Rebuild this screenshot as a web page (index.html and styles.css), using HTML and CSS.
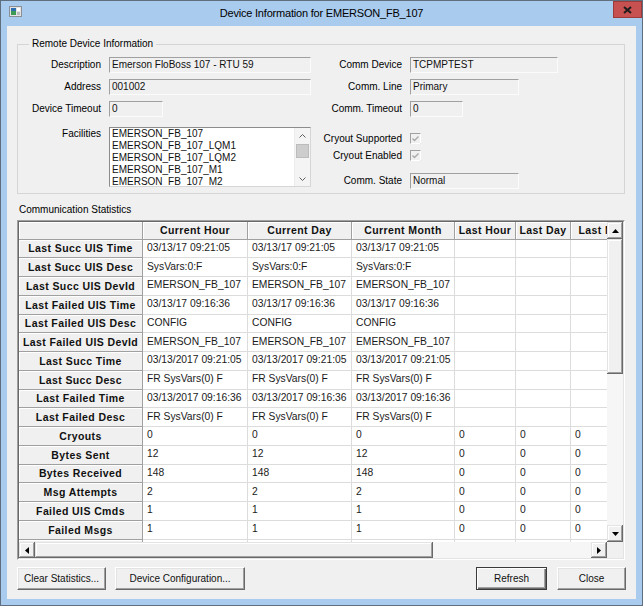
FILE: index.html
```html
<!DOCTYPE html>
<html lang="en">
<head>
<meta charset="utf-8">
<title>Device Information for EMERSON_FB_107</title>
<link rel="stylesheet" href="styles.css">
</head>
<body>
<div class="window">
  <div class="titlebar">
    <div class="tb-left">
      <svg class="app-icon" viewBox="0 0 13 11" width="13" height="11">
        <rect x="0.5" y="0.5" width="12" height="10" fill="#e4e4e4" stroke="#8a8f96"/>
        <rect x="2" y="2" width="5" height="7" fill="#2f6fb0"/>
        <rect x="2" y="5" width="5" height="4" fill="#3c9a55"/>
        <rect x="8" y="2" width="3" height="3" fill="#ffffff"/>
        <rect x="8" y="6" width="3" height="3" fill="#b8bcc2"/>
      </svg>
    </div>
    <div class="title">Device Information for EMERSON_FB_107</div>
    <div class="tb-right">
      <div class="close-btn">
        <svg viewBox="0 0 9 8" width="9" height="8"><path d="M1 1 L8 7 M8 1 L1 7" stroke="#1c1c1c" stroke-width="2" fill="none"/></svg>
      </div>
    </div>
  </div>

  <div class="client">
    <fieldset class="group">
      <legend>Remote Device Information</legend>
      <div class="group-body">
        <div class="form form-left">
          <div class="lbl">Description</div><div class="field w202">Emerson FloBoss 107 - RTU 59</div>
          <div class="lbl">Address</div><div class="field w202">001002</div>
          <div class="lbl">Device Timeout</div><div class="field w54">0</div>
          <div class="lbl lbl-top">Facilities</div>
          <div class="listbox">
            <div class="list-items">
              <div>EMERSON_FB_107</div>
              <div>EMERSON_FB_107_LQM1</div>
              <div>EMERSON_FB_107_LQM2</div>
              <div>EMERSON_FB_107_M1</div>
              <div>EMERSON_FB_107_M2</div>
            </div>
            <div class="lb-scroll">
              <div class="lb-btn"><svg viewBox="0 0 7 4" width="7" height="4"><path d="M0.5 3.5 L3.5 0.5 L6.5 3.5" stroke="#606060" fill="none"/></svg></div>
              <div class="lb-track"><div class="lb-thumb"></div></div>
              <div class="lb-btn"><svg viewBox="0 0 7 4" width="7" height="4"><path d="M0.5 0.5 L3.5 3.5 L6.5 0.5" stroke="#606060" fill="none"/></svg></div>
            </div>
          </div>
        </div>
        <div class="form form-right">
          <div class="lbl">Comm Device</div><div class="field w148">TCPMPTEST</div>
          <div class="lbl">Comm. Line</div><div class="field w109">Primary</div>
          <div class="lbl">Comm. Timeout</div><div class="field w53">0</div>
          <div class="lbl lbl-chk">Cryout Supported</div>
          <div class="chk-cell"><svg class="chk" viewBox="0 0 11 11" width="11" height="11"><rect x="0.5" y="0.5" width="10" height="10" fill="#f0f0f0" stroke="#a0a0a0"/><path d="M10.5 0.5 V10.5 H0.5" stroke="#ffffff" fill="none"/><path d="M2.5 5.5 L4.5 7.5 L8.5 3.5" stroke="#a8a8a8" stroke-width="1.4" fill="none"/></svg></div>
          <div class="lbl lbl-chk">Cryout Enabled</div>
          <div class="chk-cell"><svg class="chk" viewBox="0 0 11 11" width="11" height="11"><rect x="0.5" y="0.5" width="10" height="10" fill="#f0f0f0" stroke="#a0a0a0"/><path d="M10.5 0.5 V10.5 H0.5" stroke="#ffffff" fill="none"/><path d="M2.5 5.5 L4.5 7.5 L8.5 3.5" stroke="#a8a8a8" stroke-width="1.4" fill="none"/></svg></div>
          <div class="lbl">Comm. State</div><div class="field w109">Normal</div>
        </div>
      </div>
    </fieldset>

    <div class="section-label">Communication Statistics</div>

    <div class="grid-frame">
      <div class="grid-inner">
        <div class="grid-main">
          <div class="viewport">
            <table class="stats">
              <colgroup>
                <col class="c-rh"><col class="c-ch"><col class="c-cd"><col class="c-cm"><col class="c-lh"><col class="c-ld"><col class="c-lm">
              </colgroup>
              <tr class="hdr"><th class="corner"></th><th>Current Hour</th><th>Current Day</th><th>Current Month</th><th>Last Hour</th><th>Last Day</th><th class="clip">Last Month</th></tr>
              <tr><th>Last Succ UIS Time</th><td>03/13/17 09:21:05</td><td>03/13/17 09:21:05</td><td>03/13/17 09:21:05</td><td></td><td></td><td></td></tr>
              <tr><th>Last Succ UIS Desc</th><td>SysVars:0:F</td><td>SysVars:0:F</td><td>SysVars:0:F</td><td></td><td></td><td></td></tr>
              <tr><th>Last Succ UIS DevId</th><td>EMERSON_FB_107</td><td>EMERSON_FB_107</td><td>EMERSON_FB_107</td><td></td><td></td><td></td></tr>
              <tr><th>Last Failed UIS Time</th><td>03/13/17 09:16:36</td><td>03/13/17 09:16:36</td><td>03/13/17 09:16:36</td><td></td><td></td><td></td></tr>
              <tr><th>Last Failed UIS Desc</th><td>CONFIG</td><td>CONFIG</td><td>CONFIG</td><td></td><td></td><td></td></tr>
              <tr><th>Last Failed UIS DevId</th><td>EMERSON_FB_107</td><td>EMERSON_FB_107</td><td>EMERSON_FB_107</td><td></td><td></td><td></td></tr>
              <tr><th>Last Succ Time</th><td>03/13/2017 09:21:05</td><td>03/13/2017 09:21:05</td><td>03/13/2017 09:21:05</td><td></td><td></td><td></td></tr>
              <tr><th>Last Succ Desc</th><td>FR SysVars(0) F</td><td>FR SysVars(0) F</td><td>FR SysVars(0) F</td><td></td><td></td><td></td></tr>
              <tr><th>Last Failed Time</th><td>03/13/2017 09:16:36</td><td>03/13/2017 09:16:36</td><td>03/13/2017 09:16:36</td><td></td><td></td><td></td></tr>
              <tr><th>Last Failed Desc</th><td>FR SysVars(0) F</td><td>FR SysVars(0) F</td><td>FR SysVars(0) F</td><td></td><td></td><td></td></tr>
              <tr><th>Cryouts</th><td>0</td><td>0</td><td>0</td><td>0</td><td>0</td><td>0</td></tr>
              <tr><th>Bytes Sent</th><td>12</td><td>12</td><td>12</td><td>0</td><td>0</td><td>0</td></tr>
              <tr><th>Bytes Received</th><td>148</td><td>148</td><td>148</td><td>0</td><td>0</td><td>0</td></tr>
              <tr><th>Msg Attempts</th><td>2</td><td>2</td><td>2</td><td>0</td><td>0</td><td>0</td></tr>
              <tr><th>Failed UIS Cmds</th><td>1</td><td>1</td><td>1</td><td>0</td><td>0</td><td>0</td></tr>
              <tr><th>Failed Msgs</th><td>1</td><td>1</td><td>1</td><td>0</td><td>0</td><td>0</td></tr>
              <tr><th></th><td></td><td></td><td></td><td></td><td></td><td></td></tr>
            </table>
          </div>
          <div class="vscroll">
            <div class="sb-btn vbtn"><svg viewBox="0 0 7 4" width="7" height="4"><path d="M3.5 0 L7 4 L0 4 Z" fill="#000"/></svg></div>
            <div class="sb-thumb vthumb"></div>
            <div class="sb-track"></div>
            <div class="sb-btn vbtn"><svg viewBox="0 0 7 4" width="7" height="4"><path d="M0 0 L7 0 L3.5 4 Z" fill="#000"/></svg></div>
          </div>
        </div>
        <div class="hscroll-row">
          <div class="hscroll">
            <div class="sb-btn hbtn"><svg viewBox="0 0 4 7" width="4" height="7"><path d="M0 3.5 L4 0 L4 7 Z" fill="#000"/></svg></div>
            <div class="sb-thumb hthumb"></div>
            <div class="sb-track"></div>
            <div class="sb-btn hbtn"><svg viewBox="0 0 4 7" width="4" height="7"><path d="M0 0 L4 3.5 L0 7 Z" fill="#000"/></svg></div>
          </div>
          <div class="sb-corner"></div>
        </div>
      </div>
    </div>

    <div class="buttons">
      <div class="btn b-clear">Clear Statistics...</div>
      <div class="btn b-config">Device Configuration...</div>
      <div class="spacer"></div>
      <div class="btn btn-default b-refresh">Refresh</div>
      <div class="btn b-close">Close</div>
    </div>
  </div>
</div>
</body>
</html>
```
FILE: styles.css
```css
* { box-sizing: border-box; }
html, body { margin: 0; padding: 0; }
body {
  width: 643px;
  height: 606px;
  overflow: hidden;
  font-family: "Liberation Sans", Arial, sans-serif;
  font-size: 10px;
  color: #000;
  background: #a9cbee;
}
.window {
  width: 643px;
  height: 606px;
  background: #a9cbee;
  border: 1px solid #5f6f80;
  display: flex;
  flex-direction: column;
}
.titlebar {
  flex: none;
  height: 25px;
  display: grid;
  grid-template-columns: 1fr auto 1fr;
  align-items: start;
}
.tb-left { padding: 5px 0 0 8px; }
.app-icon { display: block; }
.title {
  font-size: 11px;
  letter-spacing: -0.2px;
  line-height: 25px;
  color: #000;
  white-space: nowrap;
}
.tb-right { display: flex; justify-content: flex-end; }
.close-btn {
  width: 29px;
  height: 17px;
  background: #c75050;
  border: 1px solid #9d3a3a;
  display: flex;
  align-items: center;
  justify-content: center;
}
.close-btn svg { display: block; }

.client {
  flex: 1;
  margin: 0 6px 6px 6px;
  background: #f0f0f0;
  display: flex;
  flex-direction: column;
  padding: 0 11px 0 10px;
}

/* group box */
.group {
  margin: 12px 0 0 0;
  padding: 7px 0 4px 0;
  border: 1px solid #d5d5d5;
  min-width: 0;
}
.group legend {
  margin-left: 11px;
  padding: 0 3px;
  line-height: 12px;
  font-size: 10px;
}
.group-body { display: flex; align-items: flex-start; }
.form { display: grid; column-gap: 8px; align-items: start; }
.form-left {
  grid-template-columns: 83px 202px;
  grid-template-rows: 22px 22px 26px 60px;
}
.form-right {
  grid-template-columns: 91px auto;
  grid-template-rows: 22px 22px 30px 17px 25px 16px;
}
.lbl {
  text-align: right;
  line-height: 16px;
  white-space: nowrap;
}
.lbl-top { line-height: 12px; padding-top: 1px; }
.lbl-chk { line-height: 15px; }
.field {
  height: 16px;
  border-style: solid;
  border-width: 1px;
  border-color: #a0a0a0 #fbfbfb #fbfbfb #a0a0a0;
  padding-left: 2px;
  line-height: 14px;
  white-space: nowrap;
  overflow: hidden;
  color: #111;
}
.w202 { width: 202px; }
.w54 { width: 54px; }
.w148 { width: 148px; }
.w109 { width: 109px; }
.w53 { width: 53px; }
.chk-cell { height: 15px; display: flex; align-items: center; }
.chk { display: block; }

/* listbox */
.listbox {
  width: 202px;
  height: 60px;
  border-style: solid;
  border-width: 1px;
  border-color: #8c8c8c #d6d6d6 #d6d6d6 #8c8c8c;
  background: #fff;
  display: flex;
  overflow: hidden;
}
.list-items {
  flex: 1;
  padding: 0 0 0 2px;
  line-height: 12px;
  overflow: hidden;
  white-space: nowrap;
  color: #111;
}
.lb-scroll {
  width: 16px;
  display: flex;
  flex-direction: column;
  background: #f4f4f4;
  border-left: 1px solid #ececec;
}
.lb-btn {
  height: 15px;
  display: flex;
  align-items: center;
  justify-content: center;
  flex: none;
}
.lb-btn svg { display: block; }
.lb-track { flex: 1; padding: 1px 1px 0 1px; }
.lb-thumb {
  height: 14px;
  background: #cdcdcd;
  border: 1px solid #bcbcbc;
}

/* stats */
.section-label {
  margin: 10px 0 4px 2px;
  line-height: 12px;
}
.grid-frame {
  border-style: solid;
  border-width: 1px;
  border-color: #a0a0a0 #ffffff #ffffff #a0a0a0;
}
.grid-inner {
  border-style: solid;
  border-width: 1px;
  border-color: #696969 #e3e3e3 #e3e3e3 #696969;
  display: flex;
  flex-direction: column;
}
.grid-main { display: flex; height: 320px; }
.viewport { flex: 1; overflow: hidden; background: #f0f0f0; }
.stats {
  table-layout: fixed;
  border-collapse: separate;
  border-spacing: 0;
  width: 628px;
}
.c-rh { width: 124px; }
.c-ch { width: 105px; }
.c-cd { width: 104px; }
.c-cm { width: 103px; }
.c-lh { width: 61px; }
.c-ld { width: 55px; }
.c-lm { width: 76px; }
.stats tr { height: 18.75px; }
.stats tr.hdr { height: 17.5px; }
.stats th {
  background: #f0f0f0;
  border-right: 1px solid #a0a0a0;
  border-bottom: 1px solid #a0a0a0;
  box-shadow: inset 1px 1px 0 #ffffff;
  font-weight: bold;
  font-size: 10.5px;
  letter-spacing: 0.4px;
  text-align: center;
  white-space: nowrap;
  overflow: hidden;
  padding: 0;
  line-height: 12px;
  color: #111;
}
.stats td {
  background: #fff;
  border-right: 1px solid #dcdcdc;
  border-bottom: 1px solid #dcdcdc;
  padding: 0 0 1px 4px;
  white-space: nowrap;
  overflow: hidden;
  font-size: 10.3px;
  line-height: 12px;
  color: #1a1a1a;
}

/* classic scrollbars */
.vscroll {
  width: 16px;
  flex: none;
  display: flex;
  flex-direction: column;
  background: #f6f6f6;
}
.sb-btn, .sb-thumb, .sb-corner { background: #f0f0f0; }
.sb-btn, .sb-thumb {
  box-shadow: inset -1px -1px 0 #696969, inset 1px 1px 0 #e3e3e3, inset -2px -2px 0 #a0a0a0, inset 2px 2px 0 #ffffff;
}
.sb-btn { display: flex; align-items: center; justify-content: center; flex: none; }
.sb-btn svg { display: block; }
.vbtn { height: 17px; }
.vthumb { height: 135px; flex: none; }
.sb-track { flex: 1; background: #f6f6f6; }
.hscroll-row { display: flex; height: 16px; }
.hscroll { flex: 1; display: flex; background: #f6f6f6; }
.hbtn { width: 16px; }
.hthumb { width: 398px; flex: none; }
.sb-corner { width: 16px; flex: none; }

/* buttons */
.buttons {
  margin-top: auto;
  padding-bottom: 9px;
  display: flex;
  align-items: center;
  gap: 9px;
}
.spacer { flex: 1; }
.btn {
  height: 23px;
  background: #f0f0f0;
  border-style: solid;
  border-width: 1px;
  border-color: #ffffff #696969 #696969 #ffffff;
  box-shadow: inset -1px -1px 0 #a0a0a0, inset 1px 1px 0 #e3e3e3;
  display: flex;
  align-items: center;
  justify-content: center;
  white-space: nowrap;
  color: #111;
}
.btn-default { outline: 1px solid #3a3a3a; outline-offset: -1px; border-color: #3a3a3a; box-shadow: inset 1px 1px 0 #fff, inset -1px -1px 0 #696969, inset -2px -2px 0 #a0a0a0; }
.b-clear { width: 89px; }
.b-config { width: 130px; }
.b-refresh { width: 71px; margin-right: 1px; }
.b-close { width: 69px; margin-right: -1px; }
```
